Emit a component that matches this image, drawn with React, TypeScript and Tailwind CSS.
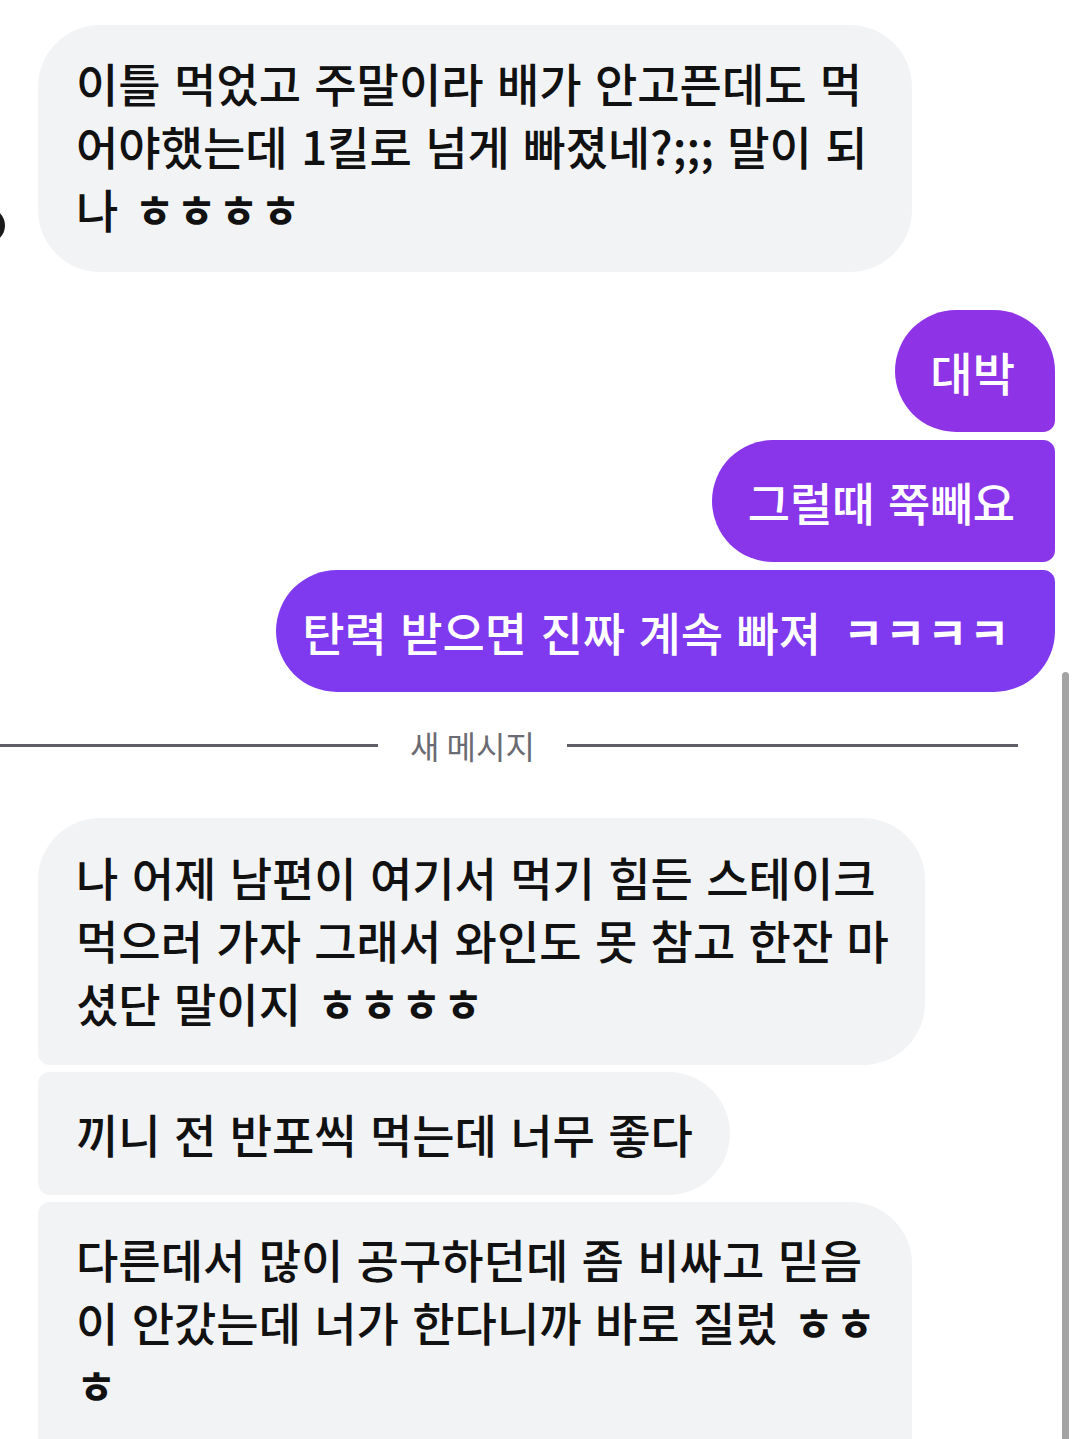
const font = { fontFamily: '"Noto Sans CJK KR", "Noto Sans", sans-serif' };

function Jamo({ children }: { children: string }) {
  return <span className="ml-[16px] text-[44px] tracking-[1.5px] font-semibold">{children}</span>;
}

function LeftBubble({
  className,
  lines,
}: {
  className: string;
  lines: React.ReactNode[];
}) {
  return (
    <div className={`bg-[#f2f3f5] text-[#111111] pl-[38px] pr-[20px] ${className}`}>
      {lines.map((l, i) => (
        <div key={i} className="h-[63px] leading-[63px] whitespace-nowrap">
          {l}
        </div>
      ))}
    </div>
  );
}

function RightBubble({
  className,
  children,
}: {
  className: string;
  children: React.ReactNode;
}) {
  return (
    <div
      className={`h-[122px] flex items-center justify-end pr-[40px] text-white whitespace-nowrap ${className}`}
    >
      {children}
    </div>
  );
}

export default function App() {
  return (
    <div
      className="relative w-[1080px] h-[1439px] overflow-hidden bg-white text-[46px] font-medium tracking-[0px] [word-spacing:3px]"
      style={font}
    >
      {/* avatar edge peeking on the left */}
      <div className="absolute left-[-30px] top-[208px] w-[35px] h-[35px] rounded-full bg-[#1a1a1a]" />

      {/* scrollbar */}
      <div className="absolute left-[1062px] top-[672px] w-[7px] h-[800px] rounded-t-full bg-[#a3a3a3]" />

      <div className="flex flex-col pt-[25px]">
        <LeftBubble
          className="ml-[38px] w-[874px] rounded-[62px] pt-[26px] pb-[32px]"
          lines={[
            "이틀 먹었고 주말이라 배가 안고픈데도 먹",
            "어야했는데 1킬로 넘게 빠졌네?;;; 말이 되",
            <>
              나<Jamo>ㅎㅎㅎㅎ</Jamo>
            </>,
          ]}
        />

        <div className="mt-[38px] mr-[25px] flex flex-col items-end gap-[8px]">
          <RightBubble className="w-[160px] bg-[#8f33e6] rounded-tl-[62px] rounded-tr-[62px] rounded-bl-[62px] rounded-br-[12px]">
            대박
          </RightBubble>
          <RightBubble className="w-[343px] bg-[#8936ea] rounded-tl-[62px] rounded-bl-[62px] rounded-tr-[12px] rounded-br-[12px]">
            그럴때 쭉빼요
          </RightBubble>
          <RightBubble className="w-[779px] bg-[#7f39ee] rounded-tl-[62px] rounded-bl-[62px] rounded-br-[62px] rounded-tr-[12px] pr-[44px]">
            탄력 받으면 진짜 계속 빠져
            <span className="ml-[22px] text-[44px] tracking-[1.5px] font-semibold">ㅋㅋㅋㅋ</span>
          </RightBubble>
        </div>

        <div className="mt-[33px] h-[40px] w-[1018px] flex items-center gap-[32px]">
          <div className="w-[378px] h-[3px] bg-[#5f5f68]" />
          <span className="text-[32px] font-normal tracking-normal [word-spacing:0px] text-[#6b6b73]">
            새 메시지
          </span>
          <div className="flex-1 h-[3px] bg-[#5f5f68]" />
        </div>

        <div className="mt-[53px] ml-[38px] flex flex-col gap-[7px]">
          <LeftBubble
            className="w-[887px] rounded-tl-[62px] rounded-tr-[62px] rounded-br-[62px] rounded-bl-[12px] pt-[27px] pb-[31px]"
            lines={[
              "나 어제 남편이 여기서 먹기 힘든 스테이크",
              "먹으러 가자 그래서 와인도 못 참고 한잔 마",
              <>
                셨단 말이지<Jamo>ㅎㅎㅎㅎ</Jamo>
              </>,
            ]}
          />
          <LeftBubble
            className="w-[692px] h-[123px] flex flex-col justify-center rounded-tl-[12px] rounded-bl-[12px] rounded-tr-[62px] rounded-br-[62px]"
            lines={["끼니 전 반포씩 먹는데 너무 좋다"]}
          />
          <LeftBubble
            className="w-[874px] h-[300px] pt-[25px] rounded-tl-[12px] rounded-tr-[62px] rounded-br-[62px]"
            lines={[
              "다른데서 많이 공구하던데 좀 비싸고 믿음",
              <>
                이 안갔는데 너가 한다니까 바로 질렀<Jamo>ㅎㅎ</Jamo>
              </>,
              <span className="text-[44px] font-semibold">ㅎ</span>,
            ]}
          />
        </div>
      </div>
    </div>
  );
}
